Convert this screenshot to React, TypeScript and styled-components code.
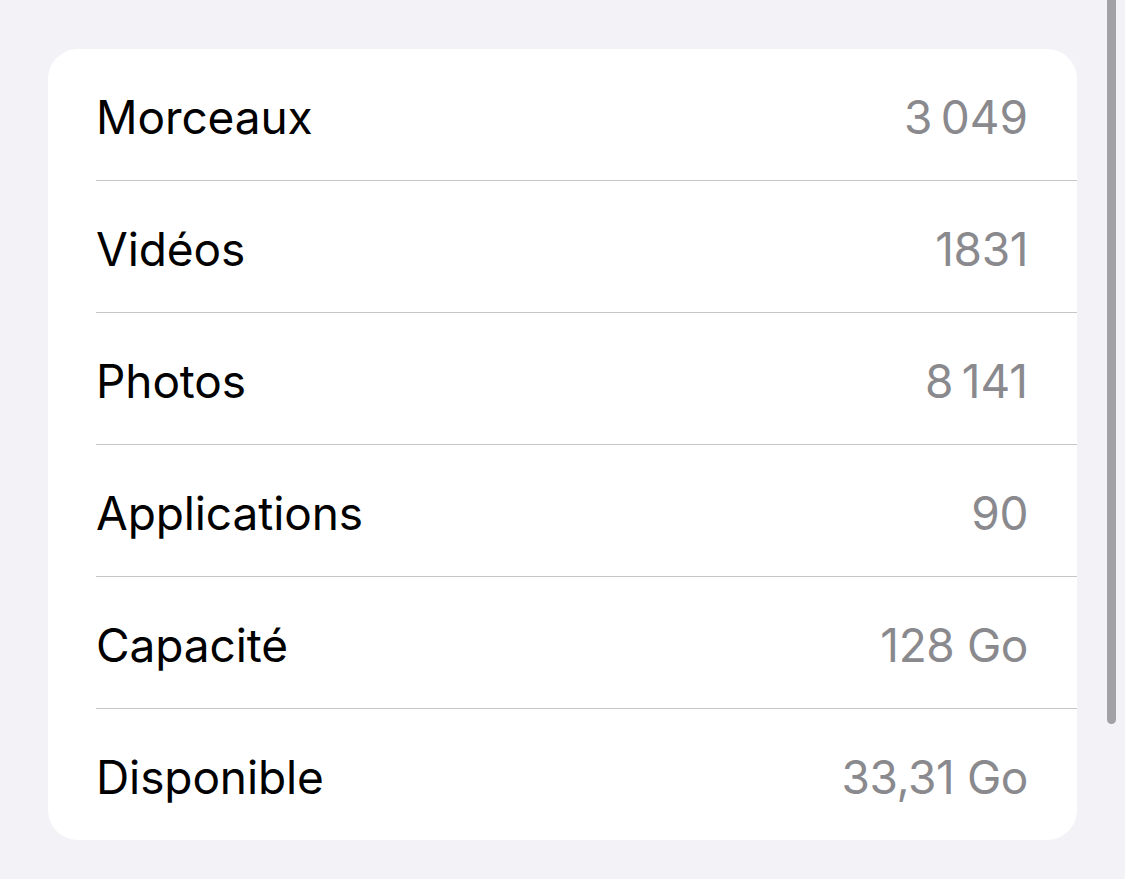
import React from "react";
import styled, { createGlobalStyle } from "styled-components";

const Global = createGlobalStyle`
  html, body { margin: 0; padding: 0; background: #f2f2f7; }
  body { font-family: Inter, "Noto Sans", sans-serif; -webkit-font-smoothing: antialiased; }
`;

const Page = styled.div`
  position: relative;
  width: 1125px;
  height: 879px;
  box-sizing: border-box;
  padding: 49px 48px 0 48px;
  background: #f2f2f7;
  overflow: hidden;
`;

const Card = styled.div`
  width: 1029px;
  background: #ffffff;
  border-radius: 30px;
  overflow: hidden;
  display: flex;
  flex-direction: column;
`;

const Row = styled.div<{ $last?: boolean }>`
  display: flex;
  align-items: center;
  justify-content: space-between;
  height: 131px;
  margin-left: 48px;
  padding-right: 49px;
  border-bottom: ${(p) => (p.$last ? "none" : "1px solid #c6c6c8")};
`;

const Label = styled.span`
  font-size: 46px;
  color: #000000;
  letter-spacing: -0.1px;
  line-height: 1;
  transform: translateY(2px);
`;

const Value = styled.span`
  font-size: 46px;
  color: #8a8a8e;
  letter-spacing: -0.4px;
  line-height: 1;
  transform: translateY(2px);
`;

const ScrollThumb = styled.div`
  position: absolute;
  top: 0;
  left: 1107px;
  width: 9px;
  height: 724px;
  background: #a1a1a6;
  border-radius: 0 0 5px 5px;
`;

const rows: [string, string][] = [
  ["Morceaux", "3\u202F049"],
  ["Vidéos", "1831"],
  ["Photos", "8\u202F141"],
  ["Applications", "90"],
  ["Capacité", "128 Go"],
  ["Disponible", "33,31 Go"],
];

export default function App() {
  return (
    <Page>
      <Global />
      <Card>
        {rows.map(([l, v], i) => (
          <Row key={l} $last={i === rows.length - 1}>
            <Label>{l}</Label>
            <Value>{v}</Value>
          </Row>
        ))}
      </Card>
      <ScrollThumb />
    </Page>
  );
}
